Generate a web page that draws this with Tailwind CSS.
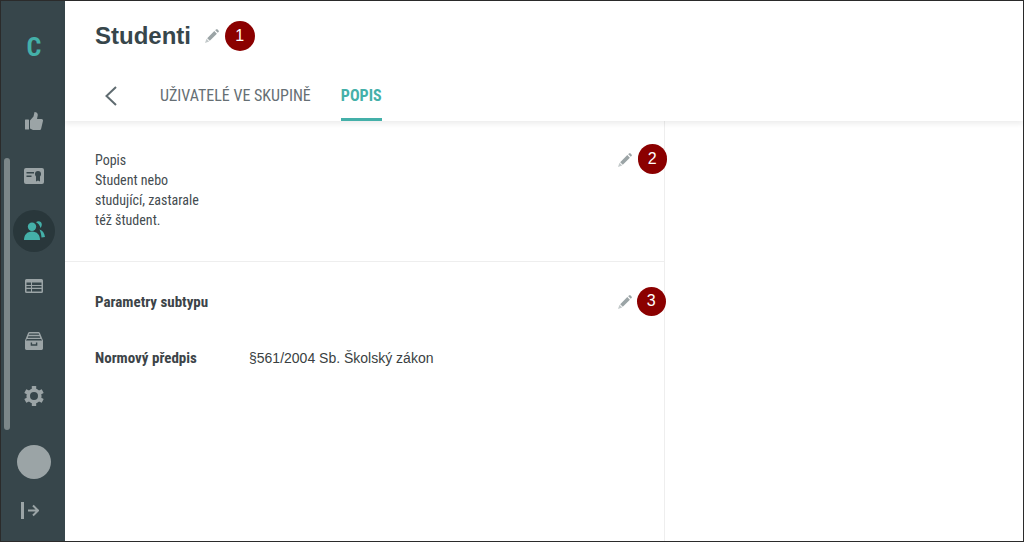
<!DOCTYPE html>
<html lang="en">
<head>
  <meta charset="UTF-8">
  <title>Studenti</title>
  <script src="https://cdn.jsdelivr.net/npm/@tailwindcss/browser@4"></script>
</head>
<body class="h-[542px] w-[1024px] overflow-hidden bg-white font-['Roboto',sans-serif]">
  <div class="relative flex h-full w-full border border-[#2b2b2b]">
    <!-- sidebar -->
    <aside class="relative flex w-[64px] shrink-0 flex-col items-center bg-[#37464b] pl-[2px] pt-[31px]">
      <div class="absolute left-[3px] top-[157px] h-[272px] w-[6px] rounded-full bg-[#7c8789]"></div>
      <div class="flex h-[30px] items-center text-[26px] font-bold leading-none text-[#44b0a9] [font-stretch:75%]">C</div>
      <nav class="mt-[31px] flex flex-col items-center">
        <a class="flex h-[55px] w-[42px] items-center justify-center">
          <svg class="h-[18px] w-[18px] fill-[#9ba4a6]" viewBox="0 0 18 18"><rect x="0" y="7.500" width="4" height="10" rx="0.600"/><path d="M5 8.500 8.500 4.500 9.500 0c2 0 3.300 1.200 3.300 3l-.8 4h4.500c1 0 1.500.8 1.500 1.800l-1.800 7.700c-.2 1-.9 1.500-1.900 1.500H8L5 16.500z"/></svg>
        </a>
        <a class="flex h-[55px] w-[42px] items-center justify-center">
          <svg class="h-[16px] w-[20px]" viewBox="0 0 20 16"><rect width="20" height="16" rx="2" fill="#9ba4a6"/><path d="M2.500 4h7.500v1.500h-7.500zM2.500 7.500h5v1.500h-5z" fill="#37464b"/><circle cx="14" cy="6" r="3" fill="#37464b"/><path d="M12 8h4v5.500l-2-1-2 1z" fill="#37464b"/></svg>
        </a>
        <a class="my-[6.5px] flex h-[42px] w-[42px] items-center justify-center rounded-full bg-[#29373b]">
          <svg class="h-[20px] w-[21px] fill-[#44b0a9]" viewBox="0 0 21 20"><circle cx="8" cy="5.700" r="4.200"/><path d="M0 19c0-5 3-8.500 8-8.500s8 3.500 8 8.500z"/><path d="M12 1.200c.8-.8 2-1.200 3-1 2 .3 3 2 2.800 3.800-.1 1-.6 2.200-1.300 3-.5-2.500-2.300-4.800-4.500-5.800z"/><path d="M15.500 8.500c3 .8 5 3.500 5.500 7.500l-3.500.5c-.3-3-.8-5.500-2-8z"/></svg>
        </a>
        <a class="flex h-[55px] w-[42px] items-center justify-center">
          <svg class="h-[14px] w-[18px]" viewBox="0 0 18 14"><path fill="#9ba4a6" d="M1.500 0h15A1.500 1.500 0 0 1 18 1.500v11a1.500 1.500 0 0 1-1.500 1.500h-15A1.500 1.500 0 0 1 0 12.500v-11A1.500 1.500 0 0 1 1.500 0z"/><path fill="#37464b" d="M1.500 3.500h4.500v2.500h-4.500zM7 3.500h9.500v2.500h-9.500zM1.500 7h4.500v1.800h-4.500zM7 7h9.500v1.800h-9.500zM1.500 10h4.500v2.500h-4.500zM7 10h9.500v2.500h-9.500z"/></svg>
        </a>
        <a class="flex h-[55px] w-[42px] items-center justify-center">
          <svg class="h-[18px] w-[18px]" viewBox="0 0 19 19"><path fill="#9ba4a6" d="M0 9 3 1.500C3.300.700 3.800 0 5 0h9c1.200 0 1.700.700 2 1.500L19 9v8.500a1.500 1.500 0 0 1-1.500 1.500h-16A1.500 1.500 0 0 1 0 17.500z"/><path fill="#37464b" d="M4.500 1.500h10l.5 1.500H4zM3.500 4.500h12l.5 1.500H3zM2 7.500h15l1 1.500H1zM6 11h1.500v2h4v-2H13v3.500H6z"/></svg>
        </a>
        <a class="flex h-[55px] w-[42px] items-center justify-center">
          <svg class="h-[20px] w-[20px]" viewBox="0 0 20 20" fill="#9ba4a6">
            <circle cx="10" cy="10" r="5.800" fill="none" stroke="#9ba4a6" stroke-width="3.600"/>
            <rect x="7.800" y="0" width="4.400" height="4" rx="0.600"/>
            <rect x="7.800" y="16" width="4.400" height="4" rx="0.600"/>
            <rect x="7.800" y="0" width="4.400" height="4" rx="0.600" transform="rotate(60 10 10)"/>
            <rect x="7.800" y="0" width="4.400" height="4" rx="0.600" transform="rotate(120 10 10)"/>
            <rect x="7.800" y="0" width="4.400" height="4" rx="0.600" transform="rotate(240 10 10)"/>
            <rect x="7.800" y="0" width="4.400" height="4" rx="0.600" transform="rotate(300 10 10)"/>
          </svg>
        </a>
      </nav>
      <div class="mt-[22px] h-[34px] w-[34px] rounded-full bg-[#9ba4a6]"></div>
      <a class="mt-[23px] flex items-center justify-center pr-[8px]">
        <svg class="h-[17px] w-[18px]" viewBox="0 0 18 17" fill="none" stroke="#9ba4a6" stroke-width="2"><path stroke-width="3" d="M1.500 0v17"/><path d="M7 8.500h10M12 3.500l5 5-5 5"/></svg>
      </a>
    </aside>

    <!-- content -->
    <div class="flex min-w-0 flex-1 flex-col">
      <header class="relative z-10 h-[120px] shrink-0 bg-white shadow-[0_3px_5px_rgba(0,0,0,0.07)]">
        <div class="flex h-[69px] items-center pl-[30px]">
          <h1 class="font-['Liberation_Sans',sans-serif] text-[24px] font-bold leading-none text-[#37464b]">Studenti</h1>
          <svg class="ml-[14px] h-[14px] w-[14px]" viewBox="0 0 14 14"><path fill="#c3c9ca" d="M0 14l1.500-4.200 2.700 2.700z"/><path fill="#9ba4a6" d="M2.200 9.200 9.300 2.100l2.600 2.600-7.100 7.100zM10.200 1.200l.7-.7c.5-.5 1.200-.5 1.700 0l.9.900c.5.5.5 1.200 0 1.700l-.7.7z"/></svg>
        </div>
        <div class="flex h-[51px] items-center pl-[40px]">
          <svg class="h-[20px] w-[12px]" viewBox="0 0 12 20" fill="none" stroke="#5f6b70" stroke-width="2"><path d="M11 1 1.500 10l9.500 9"/></svg>
          <div class="ml-[43px] flex h-full items-center pt-[1px] text-[16px] leading-none text-[#666f74] [font-stretch:75%]">UŽIVATELÉ VE SKUPINĚ</div>
          <div class="ml-[30px] flex h-full items-center border-b-[3px] border-[#44b0a9] pt-[4px] text-[16px] font-bold leading-none text-[#44b0a9] [font-stretch:75%]">POPIS</div>
        </div>
      </header>
      <main class="flex min-h-0 flex-1">
        <div class="w-[600px] border-r border-[#eeeeee]">
          <section class="flex h-[141px] items-start justify-between border-b border-[#eeeeee] pl-[30px] pr-[32px] pt-[29px]">
            <p class="w-[120px] text-[14px] leading-[20px] text-[#444c50] [font-stretch:75%]">Popis<br>Student nebo<br>studující, zastarale<br>též študent.</p>
            <svg class="mt-[3px] h-[14px] w-[14px]" viewBox="0 0 14 14"><path fill="#c3c9ca" d="M0 14l1.500-4.200 2.700 2.700z"/><path fill="#9ba4a6" d="M2.200 9.200 9.300 2.100l2.600 2.600-7.100 7.100zM10.200 1.200l.7-.7c.5-.5 1.200-.5 1.700 0l.9.900c.5.5.5 1.200 0 1.700l-.7.7z"/></svg>
          </section>
          <section class="pl-[30px] pr-[32px]">
            <div class="flex h-[80px] items-center justify-between">
              <h2 class="text-[15px] font-bold leading-none text-[#3c4448] [font-stretch:75%]">Parametry subtypu</h2>
              <svg class="-mt-[1px] h-[14px] w-[14px]" viewBox="0 0 14 14"><path fill="#c3c9ca" d="M0 14l1.500-4.200 2.700 2.700z"/><path fill="#9ba4a6" d="M2.200 9.200 9.300 2.100l2.600 2.600-7.100 7.100zM10.200 1.200l.7-.7c.5-.5 1.200-.5 1.700 0l.9.900c.5.5.5 1.200 0 1.700l-.7.7z"/></svg>
            </div>
            <div class="mt-[6px] flex items-center text-[14px] leading-[20px]">
              <span class="w-[154px] text-[15px] font-bold text-[#3c4448] [font-stretch:75%]">Normový předpis</span>
              <span class="font-['Liberation_Sans',sans-serif] text-[#3a3f42]">§561/2004 Sb. Školský zákon</span>
            </div>
          </section>
        </div>
      </main>
    </div>

    <!-- annotation badges -->
    <div class="absolute left-[224px] top-[20px] z-20 flex h-[29.5px] w-[29.5px] items-center justify-center rounded-full bg-[#8b0000] font-['Liberation_Sans',sans-serif] text-[16px] text-white">1</div>
    <div class="absolute left-[636.5px] top-[143px] z-20 flex h-[29.5px] w-[29.5px] items-center justify-center rounded-full bg-[#8b0000] font-['Liberation_Sans',sans-serif] text-[16px] text-white">2</div>
    <div class="absolute left-[635.5px] top-[285.5px] z-20 flex h-[29.5px] w-[29.5px] items-center justify-center rounded-full bg-[#8b0000] font-['Liberation_Sans',sans-serif] text-[16px] text-white">3</div>
  </div>
</body>
</html>
